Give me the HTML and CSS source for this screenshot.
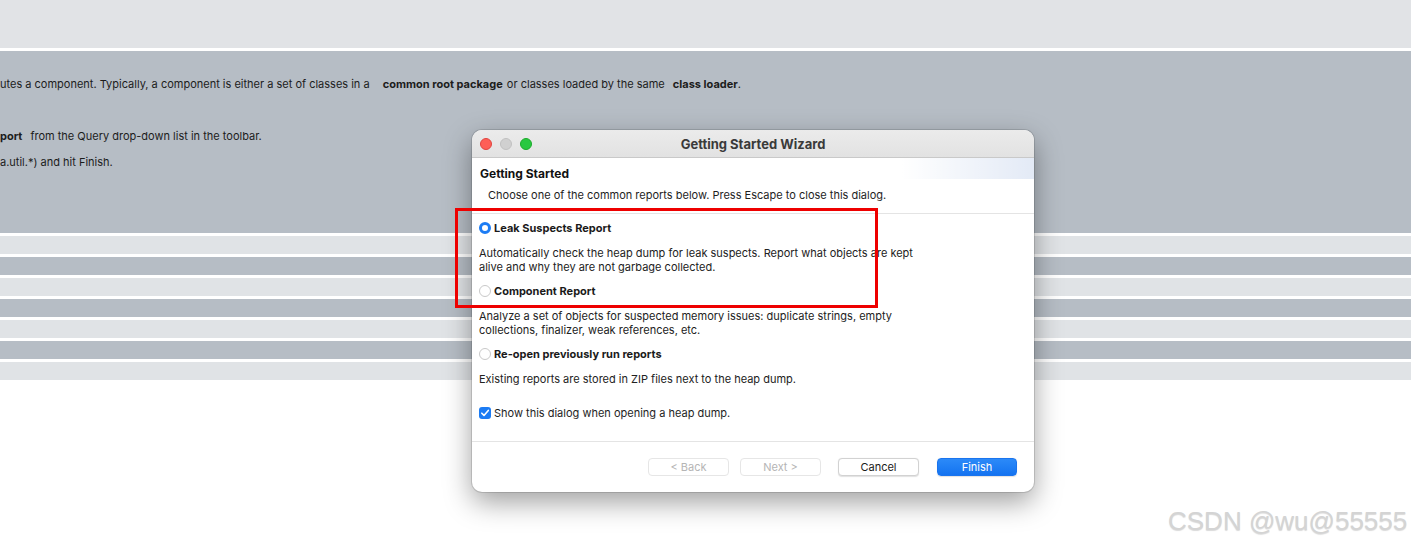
FILE: index.html
```html
<!DOCTYPE html>
<html>
<head>
<meta charset="utf-8">
<link rel="stylesheet" href="styles.css">
</head>
<body>
<div class="page">
  <div class="band-top"></div>
  <div class="band-doc">
    <p class="l1">utes a component. Typically, a component is either a set of classes in a <b class="k1">common root package</b> or classes loaded by the same <b class="k2">class loader</b>.</p>
    <p class="l2"><b>port</b><span class="sp"></span>from the Query drop-down list in the toolbar.</p>
    <p class="l3">a.util.*) and hit Finish.</p>
  </div>
  <div class="stripes">
    <div class="s light"></div>
    <div class="s dark"></div>
    <div class="s light"></div>
    <div class="s dark"></div>
    <div class="s light"></div>
    <div class="s dark"></div>
    <div class="s light"></div>
  </div>
</div>

<div class="dialog">
  <div class="titlebar">
    <div class="lights">
      <span class="tl red"></span><span class="tl gray"></span><span class="tl green"></span>
    </div>
    <div class="title">Getting Started Wizard</div>
  </div>
  <div class="header">
    <div class="h-title">Getting Started</div>
    <div class="h-sub">Choose one of the common reports below. Press Escape to close this dialog.</div>
  </div>
  <div class="body">
    <div class="opt first"><span class="radio on"></span><span class="opt-label">Leak Suspects Report</span></div>
    <div class="desc">Automatically check the heap dump for leak suspects. Report what objects are kept<br>alive and why they are not garbage collected.</div>
    <div class="opt"><span class="radio"></span><span class="opt-label">Component Report</span></div>
    <div class="desc">Analyze a set of objects for suspected memory issues: duplicate strings, empty<br>collections, finalizer, weak references, etc.</div>
    <div class="opt"><span class="radio"></span><span class="opt-label">Re-open previously run reports</span></div>
    <div class="desc">Existing reports are stored in ZIP files next to the heap dump.</div>
    <div class="check-row">
      <span class="checkbox"><svg width="12" height="12" viewBox="0 0 12 12"><path d="M2.8 6.2 L5 8.4 L9.3 3.4" fill="none" stroke="#fff" stroke-width="1.6" stroke-linecap="round" stroke-linejoin="round"/></svg></span>
      <span>Show this dialog when opening a heap dump.</span>
    </div>
  </div>
  <div class="footer">
    <button class="btn disabled b-back">&lt; Back</button>
    <button class="btn disabled b-next">Next &gt;</button>
    <button class="btn b-cancel">Cancel</button>
    <button class="btn primary b-finish">Finish</button>
  </div>
</div>

<div class="highlight"></div>
<div class="watermark">CSDN @wu@55555</div>
</body>
</html>
```

FILE: styles.css
```css
html, body {
  margin: 0;
  padding: 0;
  background: #ffffff;
  width: 1411px;
  height: 547px;
  overflow: hidden;
  font-family: Inter, "Liberation Sans", Arial, sans-serif;
}

.page {
  display: flex;
  flex-direction: column;
}

.band-top {
  height: 48px;
  background: #e1e3e6;
  border-bottom: 3px solid #ffffff;
}

.band-doc {
  box-sizing: border-box;
  height: 185px;
  background: #b6bdc5;
  border-bottom: 3px solid #ffffff;
  padding-top: 26px;
  font-size: 11px;
  line-height: 14px;
  color: #1c1c1c;
}

.band-doc p {
  margin: 0;
  white-space: nowrap;
}

.band-doc b { font-weight: 700; }
.band-doc .l2 { margin-top: 38px; }
.band-doc .l3 { margin-top: 12px; }
.band-doc .k1 { margin-left: 10px; margin-right: 1px; }
.band-doc .k2 { margin-left: 5px; }
.band-doc .sp { display: inline-block; width: 8px; }

.stripes {
  display: flex;
  flex-direction: column;
}

.s {
  height: 18px;
  border-bottom: 3px solid #ffffff;
}
.s.light { background: #e0e3e6; }
.s.dark { background: #b6bdc5; }

/* Dialog window */
.dialog {
  position: absolute;
  left: 472px;
  top: 130px;
  width: 562px;
  height: 362px;
  background: #ffffff;
  border-radius: 10px;
  overflow: hidden;
  box-shadow: 0 10px 28px rgba(0, 0, 0, 0.38), 0 0 0 1px rgba(0, 0, 0, 0.12);
  display: flex;
  flex-direction: column;
  font-size: 11px;
  color: #1e1e1e;
}

.titlebar {
  height: 27px;
  flex: none;
  background: linear-gradient(#ebebeb, #e2e2e2);
  border-bottom: 1px solid #c9c9c9;
  display: flex;
  align-items: center;
}

.lights {
  display: flex;
  gap: 8px;
  padding-left: 8px;
  width: 52px;
}

.tl {
  width: 12px;
  height: 12px;
  border-radius: 50%;
  box-sizing: border-box;
}
.tl.red { background: #fe5f57; border: 0.5px solid #e0443e; }
.tl.gray { background: #d0d0d0; border: 0.5px solid #c0c0c0; }
.tl.green { background: #28c840; border: 0.5px solid #1aab29; }

.title {
  flex: 1;
  text-align: center;
  font-weight: 700;
  font-size: 13px;
  color: #3a3a3a;
  margin-left: -60px;
}

.header {
  height: 56px;
  flex: none;
  box-sizing: border-box;
  border-bottom: 1px solid #e4e4e4;
  background:
    linear-gradient(to right, rgba(255,255,255,1) 0%, rgba(255,255,255,0) 100%) 430px 0 / 132px 21px no-repeat,
    linear-gradient(#e3eaf6, #e3eaf6) 430px 0 / 132px 21px no-repeat,
    #ffffff;
  padding-top: 8px;
}

.h-title {
  font-weight: 700;
  font-size: 12px;
  line-height: 15px;
  padding-left: 8px;
  color: #111;
}

.h-sub {
  margin-top: 7px;
  line-height: 14px;
  padding-left: 16px;
}

.body {
  flex: 1;
  padding-left: 7px;
  display: flex;
  flex-direction: column;
}

.opt {
  display: flex;
  align-items: center;
  height: 14px;
  margin-top: 10px;
  font-weight: 700;
  color: #1a1a1a;
}
.opt.first { margin-top: 7px; }

.radio {
  width: 12px;
  height: 12px;
  border-radius: 50%;
  box-sizing: border-box;
  border: 1px solid #c9c9c9;
  background: #fff;
  margin-right: 3px;
  flex: none;
}
.radio.on {
  border: 3.5px solid #1c7cf4;
  background: #fff;
}

.desc {
  margin-top: 11px;
  line-height: 14px;
  color: #222;
}

.check-row {
  display: flex;
  align-items: center;
  height: 14px;
  margin-top: 20px;
}

.checkbox {
  width: 12px;
  height: 12px;
  border-radius: 3px;
  background: #1c7cf4;
  margin-right: 3px;
  display: flex;
}

.footer {
  height: 51px;
  flex: none;
  border-top: 1px solid #e4e4e4;
  display: flex;
  align-items: flex-start;
  justify-content: flex-end;
  padding: 16px 17px 0 0;
  box-sizing: border-box;
  gap: 11px;
}

.btn {
  width: 81px;
  height: 18px;
  border-radius: 4px;
  font-family: Inter, "Liberation Sans", Arial, sans-serif;
  font-size: 11px;
  line-height: 14px;
  padding: 0 0 1px 0;
  background: #fff;
  border: 1px solid #d2d2d2;
  box-shadow: 0 0.5px 1px rgba(0,0,0,0.12);
  color: #1a1a1a;
}
.btn.disabled {
  color: #b5b5b5;
  border-color: #e6e6e6;
  box-shadow: none;
}
.b-cancel { margin-left: 6px; }
.b-finish { margin-left: 7px; width: 80px; }
.btn.primary {
  background: linear-gradient(#2c8af8, #1473f0);
  border-color: #1a74ee;
  color: #fff;
}

.highlight {
  position: absolute;
  left: 455px;
  top: 208px;
  width: 417px;
  height: 94px;
  border: 3px solid #ee0000;
}

.watermark {
  position: absolute;
  left: 1168px;
  top: 504px;
  font-size: 26px;
  line-height: 34px;
  color: #d4d4d4;
  text-shadow: 0 1px 1px rgba(0,0,0,0.15);
  white-space: nowrap;
  font-family: "Liberation Sans", Arial, sans-serif;
}
```
